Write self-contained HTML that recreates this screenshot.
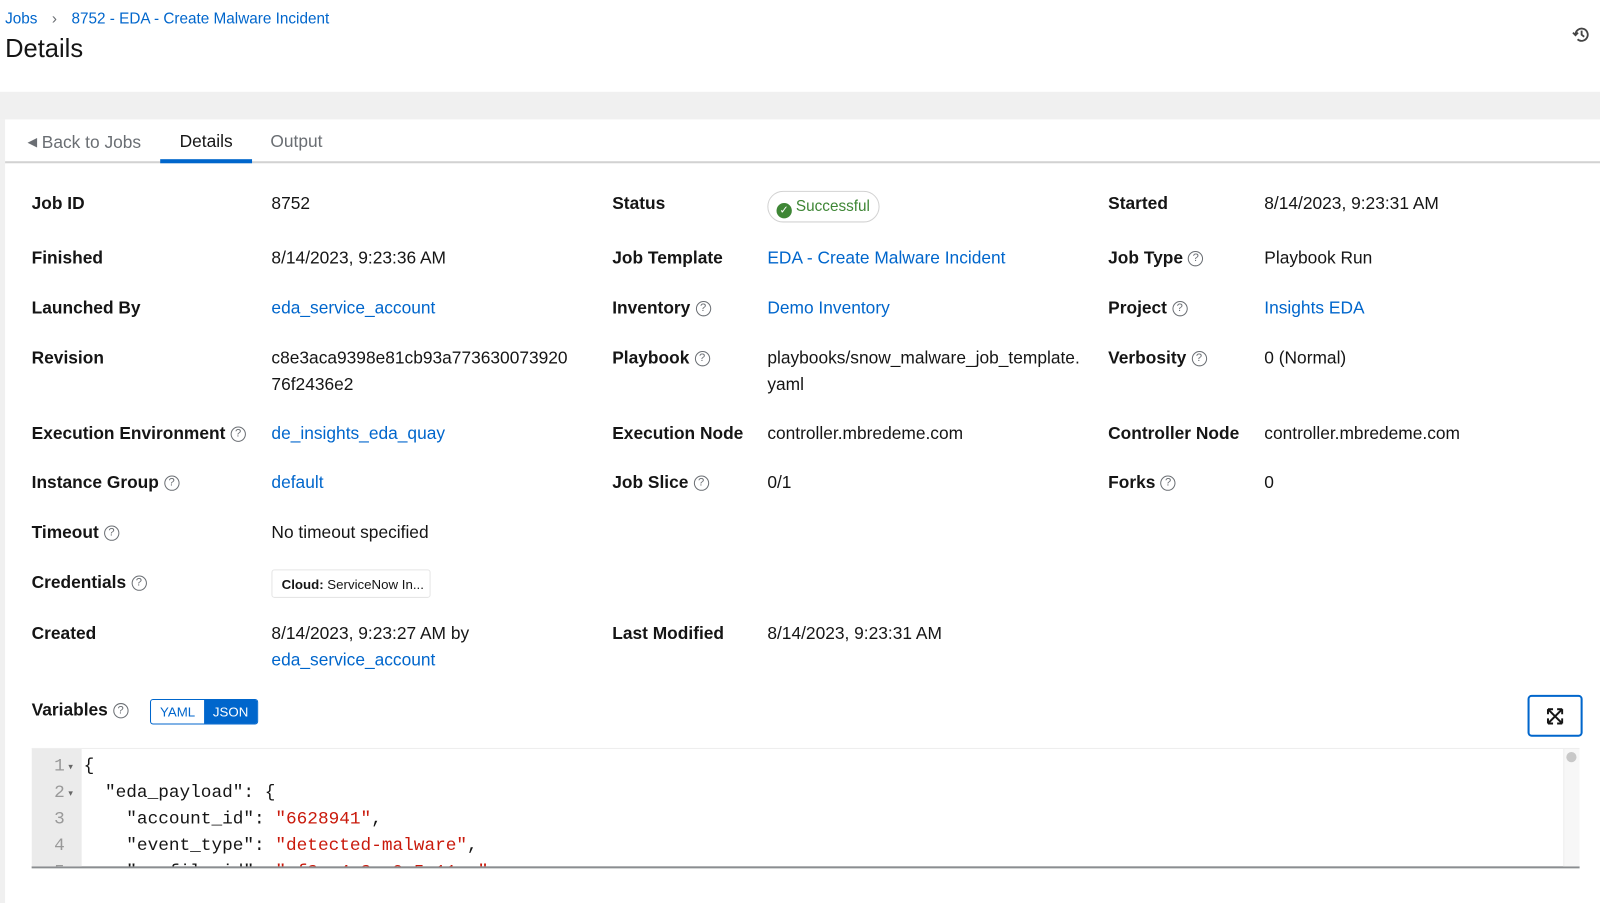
<!DOCTYPE html>
<html><head><style>
*{margin:0;padding:0;box-sizing:border-box}
body{width:1600px;height:885px;overflow:hidden;background:#fff;font-family:"Liberation Sans",sans-serif;color:#151515;position:relative}
#w{position:absolute;left:0;top:0;width:1568px;height:868px;transform:scale(1.0204);transform-origin:0 0}
.a{position:absolute;white-space:nowrap;font-size:17px;line-height:20px}
.l{font-weight:bold}
.lk{color:#0066cc}
.q{display:inline-block;width:15px;height:15px;border:1px solid #6a6e73;border-radius:50%;font-size:11px;line-height:13px;text-align:center;color:#6a6e73;font-weight:normal;vertical-align:2px;margin-left:5px}
.code{position:absolute;font-family:"Liberation Mono",monospace;font-size:17.4px;line-height:26px;white-space:pre}
</style></head><body><div id="w">
<div class="a" style="left:5px;top:9px;font-size:15px;color:#0066cc">Jobs <span style="color:#6a6e73;margin:0 10px">›</span> 8752 - EDA - Create Malware Incident</div>
<div class="a" style="left:5px;top:33px;font-size:25px;line-height:30px">Details</div>
<svg style="position:absolute;left:1540px;top:24px" width="20" height="20" viewBox="0 0 20 20" fill="none" stroke="#444" stroke-width="1.8"><path d="M4 10a6 6 0 1 1 2 4.5"/><path d="M1.5 8l2.5 2.5 2.5-2.5"/><path d="M10 6v4l2.5 2"/></svg>
<div style="position:absolute;left:0;top:90px;width:1600px;height:27px;background:#f0f0f0"></div>
<div style="position:absolute;left:0;top:117px;width:5px;height:768px;background:#f0f0f0"></div>
<div style="position:absolute;left:5px;top:158px;width:1595px;height:2px;background:#d2d2d2"></div>
<div class="a" style="left:27px;top:129px;color:#6a6e73"><span style="font-size:12px;vertical-align:2px">◀</span> Back to Jobs</div>
<div class="a" style="left:176px;top:129px">Details</div>
<div class="a" style="left:265px;top:129px;color:#6a6e73">Output</div>
<div style="position:absolute;left:157px;top:156px;width:90px;height:4px;background:#0066cc"></div>

<div class="a l" style="left:31px;top:190px">Job ID</div><div class="a" style="left:266px;top:190px">8752</div>
<div class="a l" style="left:600px;top:190px">Status</div>
<div style="position:absolute;left:752px;top:187px;width:110px;height:31px;border:1px solid #d2d2d2;border-radius:16px;font-size:15px;color:#3e8635;padding:6px 0 0 8px;white-space:nowrap"><span style="display:inline-block;width:15px;height:15px;border-radius:50%;background:#3e8635;color:#fff;font-size:11px;line-height:15px;text-align:center;vertical-align:-2px;margin-right:4px">✓</span>Successful</div>
<div class="a l" style="left:1086px;top:190px">Started</div><div class="a" style="left:1239px;top:190px">8/14/2023, 9:23:31 AM</div>

<div class="a l" style="left:31px;top:243px">Finished</div><div class="a" style="left:266px;top:243px">8/14/2023, 9:23:36 AM</div>
<div class="a l" style="left:600px;top:243px">Job Template</div><div class="a lk" style="left:752px;top:243px">EDA - Create Malware Incident</div>
<div class="a l" style="left:1086px;top:243px">Job Type<span class="q">?</span></div><div class="a" style="left:1239px;top:243px">Playbook Run</div>

<div class="a l" style="left:31px;top:292px">Launched By</div><div class="a lk" style="left:266px;top:292px">eda_service_account</div>
<div class="a l" style="left:600px;top:292px">Inventory<span class="q">?</span></div><div class="a lk" style="left:752px;top:292px">Demo Inventory</div>
<div class="a l" style="left:1086px;top:292px">Project<span class="q">?</span></div><div class="a lk" style="left:1239px;top:292px">Insights EDA</div>

<div class="a l" style="left:31px;top:341px">Revision</div><div class="a" style="left:266px;top:338px;line-height:26px">c8e3aca9398e81cb93a773630073920<br>76f2436e2</div>
<div class="a l" style="left:600px;top:341px">Playbook<span class="q">?</span></div><div class="a" style="left:752px;top:338px;line-height:26px">playbooks/snow_malware_job_template.<br>yaml</div>
<div class="a l" style="left:1086px;top:341px">Verbosity<span class="q">?</span></div><div class="a" style="left:1239px;top:341px">0 (Normal)</div>

<div class="a l" style="left:31px;top:415px">Execution Environment<span class="q">?</span></div><div class="a lk" style="left:266px;top:415px">de_insights_eda_quay</div>
<div class="a l" style="left:600px;top:415px">Execution Node</div><div class="a" style="left:752px;top:415px">controller.mbredeme.com</div>
<div class="a l" style="left:1086px;top:415px">Controller Node</div><div class="a" style="left:1239px;top:415px">controller.mbredeme.com</div>

<div class="a l" style="left:31px;top:463px">Instance Group<span class="q">?</span></div><div class="a lk" style="left:266px;top:463px">default</div>
<div class="a l" style="left:600px;top:463px">Job Slice<span class="q">?</span></div><div class="a" style="left:752px;top:463px">0/1</div>
<div class="a l" style="left:1086px;top:463px">Forks<span class="q">?</span></div><div class="a" style="left:1239px;top:463px">0</div>

<div class="a l" style="left:31px;top:512px">Timeout<span class="q">?</span></div><div class="a" style="left:266px;top:512px">No timeout specified</div>

<div class="a l" style="left:31px;top:561px">Credentials<span class="q">?</span></div>
<div style="position:absolute;left:266px;top:558px;width:156px;height:28px;border:1px solid #e5e5e5;border-radius:3px;font-size:13px;padding:6px 0 0 9px;white-space:nowrap"><b>Cloud:</b> ServiceNow In...</div>

<div class="a l" style="left:31px;top:611px">Created</div><div class="a" style="left:266px;top:608px;line-height:26px">8/14/2023, 9:23:27 AM by<br><span class="lk">eda_service_account</span></div>
<div class="a l" style="left:600px;top:611px">Last Modified</div><div class="a" style="left:752px;top:611px">8/14/2023, 9:23:31 AM</div>

<div class="a l" style="left:31px;top:686px">Variables<span class="q">?</span></div>
<div style="position:absolute;left:147px;top:685px;width:106px;height:25px;border:1px solid #0066cc;border-radius:3px;font-size:13px;overflow:hidden;display:flex">
<div style="width:52px;color:#0066cc;text-align:center;line-height:23px">YAML</div><div style="flex:1;background:#0066cc;color:#fff;text-align:center;line-height:23px">JSON</div></div>
<div style="position:absolute;left:1497px;top:681px;width:54px;height:41px;border:2px solid #0066cc;border-radius:4px"></div>
<svg style="position:absolute;left:1516px;top:694px" width="16" height="16" viewBox="0 0 16 16" stroke="#151515" stroke-width="2" fill="none"><path d="M2 2l12 12M14 2L2 14"/><path d="M1 1h5M1 1v5M15 1h-5M15 1v5M1 15h5M1 15v-5M15 15h-5M15 15v-5"/></svg>

<div style="position:absolute;left:31px;top:733px;width:1517px;height:118px;border-top:1px solid #eee;border-bottom:2px solid #8a8d90;overflow:hidden">
<div style="position:absolute;left:0;top:0;width:49px;height:120px;background:#ebebeb"></div>
<div style="position:absolute;right:0;top:0;width:16px;height:120px;background:#f7f7f7;border-left:1px solid #eee"></div>
<div style="position:absolute;right:3px;top:3px;width:10px;height:10px;border-radius:50%;background:#c8c8c8"></div>
<div class="code" style="left:22px;top:5px;color:#999">1<br>2<br>3<br>4<br>5</div>
<div class="code" style="left:36px;top:5px;color:#666;font-size:9px">▾<br>▾</div>
<div class="code" style="left:51px;top:5px;color:#151515">{
  "eda_payload": {
    "account_id": <span style="color:#c9190b">"6628941"</span>,
    "event_type": <span style="color:#c9190b">"detected-malware"</span>,
    "profile_id": <span style="color:#c9190b">"af3e-4c3-a9e5-11cc"</span></div>
</div>
</div></body></html>
